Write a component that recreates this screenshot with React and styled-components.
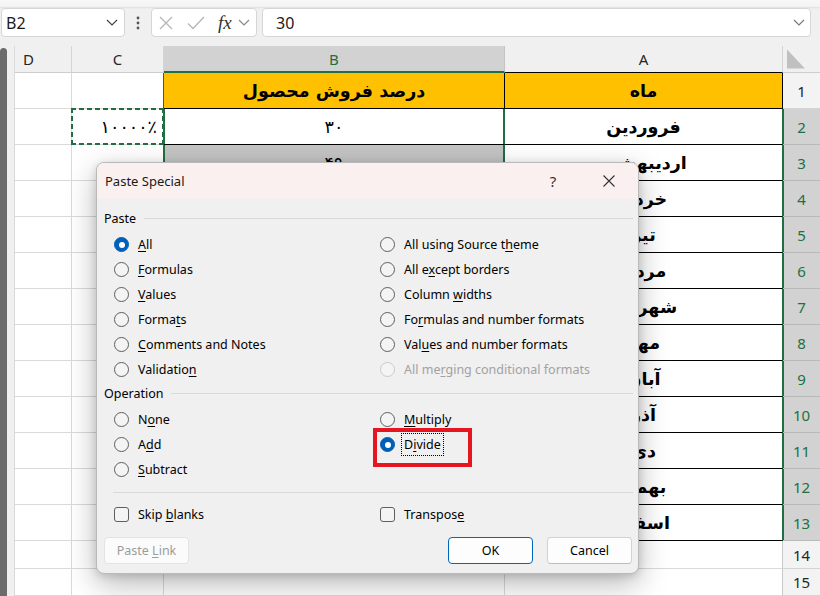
import React from 'react';
import styled, { createGlobalStyle } from 'styled-components';

const GREEN = '#1e6f41';
const UI = '"Noto Sans", "Open Sans", sans-serif';
const ARABIC = '"DejaVu Sans", sans-serif';

const months = ['فروردین', 'اردیبهشت', 'خرداد', 'تیر', 'مرداد', 'شهریور', 'مهر', 'آبان', 'آذر', 'دی', 'بهمن', 'اسفند'];
const shares = ['۳۰', '۴۹', '۲۵', '۳۸', '۴۲', '۵۵', '۳۱', '۲۷', '۴۴', '۳۶', '۵۰', '۴۱'];

const GlobalStyle = createGlobalStyle`
  * { box-sizing: border-box; }
  html, body { margin: 0; padding: 0; }
  body { background: #f0f0f0; font-family: ${UI}; overflow: hidden; }
`;

const Window = styled.div`
  position: relative;
  width: 820px;
  height: 596px;
  overflow: hidden;
  background: #f0f0f0;
  display: flex;
  flex-direction: column;
`;

const RibbonEdge = styled.div`
  height: 7px;
  background: linear-gradient(#f8f8f8, #f2f2f2);
  box-shadow: 0 1px 2px rgba(0, 0, 0, 0.07);
`;

const FormulaBar = styled.div`
  display: flex;
  align-items: center;
  height: 29px;
  margin: 1px 0 9px 1px;
`;

const Field = styled.div`
  display: flex;
  align-items: center;
  height: 29px;
  background: #fff;
  border: 1px solid #d6d6d6;
  border-radius: 4px;
  font-size: 16px;
  color: #1a1a1a;
`;

const NameBox = styled(Field)`
  width: 124px;
  padding: 0 6px 0 4px;
  justify-content: space-between;
`;

const Grip = styled.div`
  width: 26px;
  display: flex;
  justify-content: center;
`;

const FxBox = styled(Field)`
  width: 106px;
  padding-left: 7px;
`;

const ToolIcon = styled.span`
  display: flex;
  align-items: center;
  margin-left: ${p => p.$ml || 0}px;
`;

const FxText = styled.span`
  font-family: "Liberation Serif", serif;
  font-style: italic;
  font-size: 19px;
  color: #333;
  margin-left: 13px;
  line-height: 1;
`;

const FormulaInput = styled(Field)`
  margin-left: 5px;
  width: 549px;
  padding: 0 5px 0 13px;
  justify-content: space-between;
`;

const Sheet = styled.div`
  flex: 1;
  display: flex;
  min-height: 0;
`;

const LeftStrip = styled.div`
  width: 15px;
  display: flex;
  border-right: 1px solid #dadada;
`;

const Thumb = styled.div`
  width: 7px;
  margin-top: 2px;
  background: #6b6b6b;
  border-radius: 4px 4px 0 0;
`;

const Grid = styled.div`
  display: grid;
  grid-template-columns: 57px 92px 341px 278px 37px;
  grid-template-rows: 27px repeat(13, 36px) 28px 27px;
  background: #fff;
`;

const ColHeader = styled.div`
  display: flex;
  align-items: center;
  justify-content: ${p => (p.$start ? 'flex-start' : 'center')};
  padding-left: ${p => (p.$start ? '8px' : '0')};
  background: ${p => (p.$active ? '#d2d2d2' : '#f0f0f0')};
  color: ${p => (p.$active ? GREEN : '#262626')};
  border-right: 1px solid ${p => (p.$active ? '#c4c4c4' : '#d4d4d4')};
  border-bottom: ${p => (p.$active ? `2px solid ${GREEN}` : `1px solid ${p.$bc || '#cdcdcd'}`)};
  font-size: 15px;
`;

const Corner = styled.div`
  display: flex;
  align-items: center;
  padding-left: 4px;
  background: #f0f0f0;
  border-bottom: 1px solid #cdcdcd;
`;

const CornerMark = styled.span`
  width: 18px;
  height: 19px;
  background: #c0c0c0;
  clip-path: polygon(0 0, 0 100%, 100% 100%);
`;

const RowHeader = styled.div`
  display: flex;
  align-items: center;
  justify-content: center;
  background: ${p => (p.$active ? '#d2d2d2' : '#f3f3f3')};
  color: ${p => (p.$active ? GREEN : '#262626')};
  border-bottom: 1px solid ${p => (p.$active ? '#b9b9b9' : '#d4d4d4')};
  box-shadow: ${p => (p.$active ? `inset 1px 0 0 ${GREEN}` : 'none')};
  font-size: 15px;
`;

const DataCell = styled.div`
  position: relative;
  display: flex;
  align-items: center;
  justify-content: ${p => p.$align || 'center'};
  padding: 0 6px;
  background: ${p => p.$bg || '#fff'};
  border-right: 1px solid ${p => p.$rc || '#dadada'};
  border-bottom: 1px solid ${p => p.$bc || '#dadada'};
  box-shadow: ${p => (p.$sel ? `inset 1px 0 0 ${GREEN}, inset -1px 0 0 ${GREEN}` : 'none')};
  font-family: ${ARABIC};
  font-size: 17.5px;
  font-weight: ${p => (p.$bold ? 700 : 400)};
  color: #000;
  white-space: nowrap;

  ${p => p.$marquee && `
    &::after {
      content: '';
      position: absolute;
      top: -1px; left: -1px; right: -1px; bottom: -1px;
      background:
        repeating-linear-gradient(90deg, ${GREEN} 0 5px, transparent 5px 8px) top / 100% 2px no-repeat,
        repeating-linear-gradient(90deg, ${GREEN} 0 5px, transparent 5px 8px) bottom / 100% 2px no-repeat,
        repeating-linear-gradient(180deg, ${GREEN} 0 5px, transparent 5px 8px) left / 2px 100% no-repeat,
        repeating-linear-gradient(180deg, ${GREEN} 0 5px, transparent 5px 8px) right / 2px 100% no-repeat;
    }
  `}
`;

/* dialog */

const Dialog = styled.div`
  position: absolute;
  top: 162px;
  left: 96px;
  width: 543px;
  height: 412px;
  border: 1px solid #b9b9b9;
  border-radius: 8px;
  overflow: hidden;
  background: #f0f0f0;
  box-shadow: 0 10px 30px rgba(0, 0, 0, 0.28), 0 2px 8px rgba(0, 0, 0, 0.14);
  font-size: 12.5px;
  color: #000;
`;

const TitleBar = styled.div`
  height: 36px;
  display: flex;
  align-items: center;
  justify-content: space-between;
  padding: 0 9px 0 8px;
  background: #f9f0ef;
`;

const Title = styled.span`
  font-size: 13px;
  color: #1a1a1a;
`;

const TitleButtons = styled.div`
  display: flex;
  align-items: center;
  gap: 16px;
`;

const TitleButton = styled.span`
  width: 40px;
  display: flex;
  justify-content: center;
  font-size: 15px;
  color: #333;
`;

const Body = styled.div`
  padding: 11px 5px 9px 7px;
`;

const SectionHead = styled.div`
  display: flex;
  align-items: center;
  gap: 8px;
  height: 16px;
  margin-top: ${p => p.$mt || 0}px;
  &::after {
    content: '';
    flex: 1;
    height: 1px;
    background: #d9d9d9;
  }
`;

const Options = styled.div`
  display: grid;
  grid-template-columns: 266px 1fr;
  grid-template-rows: repeat(${p => p.$rows}, 25px);
  grid-auto-flow: column;
  padding-left: 10px;
  margin-top: ${p => p.$mt || 6}px;
`;

const Option = styled.div`
  position: relative;
  display: flex;
  align-items: center;
  gap: 9px;
  color: ${p => (p.$disabled ? '#a2a2a2' : '#000')};
  white-space: nowrap;
`;

const RadioDot = styled.span`
  flex: none;
  width: 15px;
  height: 15px;
  border-radius: 50%;
  display: flex;
  align-items: center;
  justify-content: center;
  border: 1px solid ${p => (p.$disabled ? '#cacaca' : p.$checked ? '#005fb8' : '#5e5e5e')};
  background: ${p => (p.$checked ? '#005fb8' : '#f4f4f4')};
  &::after {
    content: '';
    display: ${p => (p.$checked ? 'block' : 'none')};
    width: 6px;
    height: 6px;
    border-radius: 50%;
    background: #fff;
  }
`;

const CheckBox = styled.span`
  flex: none;
  width: 15px;
  height: 15px;
  border-radius: 3px;
  border: 1px solid #5e5e5e;
  background: #f4f4f4;
`;

const Label = styled.span`
  line-height: 17px;
  ${p => p.$focus && `
    outline: 1px dotted #000;
    padding: 2px 2px;
    margin-left: -2px;
  `}
  u {
    text-decoration-thickness: 1px;
    text-underline-offset: 2px;
  }
`;

const RedBox = styled.span`
  position: absolute;
  left: -7px;
  top: -4px;
  width: 99px;
  height: 39px;
  border: 4px solid #e5161f;
  pointer-events: none;
`;

const Divider = styled.div`
  height: 1px;
  background: #d9d9d9;
  margin: 10px 0 0 9px;
`;

const ButtonRow = styled.div`
  display: flex;
  align-items: center;
  margin-top: 10px;
`;

const Button = styled.button`
  width: 85px;
  height: 27px;
  margin-left: ${p => p.$ml || 0}px;
  border-radius: 4px;
  background: ${p => (p.$disabled ? '#fbfbfb' : '#fdfdfd')};
  border: 1px solid ${p => (p.$primary ? '#0067c0' : p.$disabled ? '#e3e3e3' : '#d2d2d2')};
  border-bottom-color: ${p => (p.$primary ? '#0067c0' : p.$disabled ? '#e3e3e3' : '#bdbdbd')};
  color: ${p => (p.$disabled ? '#9c9c9c' : '#000')};
  font-family: ${UI};
  font-size: 12.5px;
  padding: 0;
  u {
    text-underline-offset: 2px;
  }
`;

const Chevron = ({ color = '#444' }) => (
  <svg width="12" height="7" viewBox="0 0 12 7">
    <path d="M1 1l5 5 5-5" fill="none" stroke={color} strokeWidth="1.2" />
  </svg>
);

const Key = ({ text, k }) => (
  <>
    {text.slice(0, k)}
    <u>{text[k]}</u>
    {text.slice(k + 1)}
  </>
);

const Radio = ({ text, k, checked, disabled, focus }) => (
  <Option $disabled={disabled}>
    <RadioDot $checked={checked} $disabled={disabled} />
    <Label $focus={focus}>
      <Key text={text} k={k} />
    </Label>
  </Option>
);

function SheetGrid() {
  const cells = [
    <ColHeader key="hD" $start>D</ColHeader>,
    <ColHeader key="hC">C</ColHeader>,
    <ColHeader key="hB" $active>B</ColHeader>,
    <ColHeader key="hA" $bc="#000">A</ColHeader>,
    <Corner key="corner"><CornerMark /></Corner>,
  ];

  for (let r = 1; r <= 15; r++) {
    const inTable = r <= 13;
    const inSel = r >= 2 && r <= 13;
    const gray = '#dadada';
    cells.push(<DataCell key={`D${r}`} />);
    cells.push(
      <DataCell key={`C${r}`} $rc={inTable ? GREEN : gray} $align="flex-end" $marquee={r === 2}>
        {r === 2 ? '۱۰۰۰۰٪' : ''}
      </DataCell>
    );
    cells.push(
      <DataCell
        key={`B${r}`}
        $bg={r === 1 ? '#ffc000' : inSel && r > 2 ? '#c4c4c4' : '#fff'}
        $rc={inSel ? GREEN : inTable ? '#000' : gray}
        $bc={inTable ? '#000' : gray}
        $sel={inSel}
        $bold={r === 1}
      >
        {r === 1 ? 'درصد فروش محصول' : inTable ? shares[r - 2] : ''}
      </DataCell>
    );
    cells.push(
      <DataCell
        key={`A${r}`}
        $bg={r === 1 ? '#ffc000' : '#fff'}
        $rc={r === 1 ? '#000' : inSel ? GREEN : '#c9c9c9'}
        $bc={inTable ? '#000' : gray}
        $bold
      >
        {r === 1 ? 'ماه' : inTable ? months[r - 2] : ''}
      </DataCell>
    );
    cells.push(<RowHeader key={`R${r}`} $active={inSel}>{r}</RowHeader>);
  }
  return <Grid>{cells}</Grid>;
}

function PasteSpecial() {
  return (
    <Dialog>
      <TitleBar>
        <Title>Paste Special</Title>
        <TitleButtons>
          <TitleButton>?</TitleButton>
          <TitleButton>
            <svg width="12" height="12" viewBox="0 0 12 12">
              <path d="M0.5 0.5l11 11M11.5 0.5l-11 11" stroke="#333" strokeWidth="1.1" />
            </svg>
          </TitleButton>
        </TitleButtons>
      </TitleBar>
      <Body>
        <SectionHead>Paste</SectionHead>
        <Options $rows={6}>
          <Radio text="All" k={0} checked />
          <Radio text="Formulas" k={0} />
          <Radio text="Values" k={0} />
          <Radio text="Formats" k={5} />
          <Radio text="Comments and Notes" k={0} />
          <Radio text="Validation" k={9} />
          <Radio text="All using Source theme" k={18} />
          <Radio text="All except borders" k={5} />
          <Radio text="Column widths" k={7} />
          <Radio text="Formulas and number formats" k={2} />
          <Radio text="Values and number formats" k={3} />
          <Radio text="All merging conditional formats" k={6} disabled />
        </Options>
        <SectionHead $mt={3}>Operation</SectionHead>
        <Options $rows={3}>
          <Radio text="None" k={1} />
          <Radio text="Add" k={1} />
          <Radio text="Subtract" k={0} />
          <Radio text="Multiply" k={0} />
          <Option>
            <RadioDot $checked />
            <Label $focus>
              <Key text="Divide" k={1} />
            </Label>
            <RedBox />
          </Option>
        </Options>
        <Divider />
        <Options $rows={1} $mt={9}>
          <Option>
            <CheckBox />
            <Label><Key text="Skip blanks" k={5} /></Label>
          </Option>
          <Option>
            <CheckBox />
            <Label><Key text="Transpose" k={8} /></Label>
          </Option>
        </Options>
        <ButtonRow>
          <Button $disabled><Key text="Paste Link" k={6} /></Button>
          <Button $primary $ml={259}>OK</Button>
          <Button $ml={14}>Cancel</Button>
        </ButtonRow>
      </Body>
    </Dialog>
  );
}

export default function App() {
  return (
    <Window>
      <GlobalStyle />
      <RibbonEdge />
      <FormulaBar>
        <NameBox>
          <span>B2</span>
          <Chevron />
        </NameBox>
        <Grip>
          <svg width="4" height="14" viewBox="0 0 4 14">
            <circle cx="2" cy="2" r="1.4" fill="#555" />
            <circle cx="2" cy="7" r="1.4" fill="#555" />
            <circle cx="2" cy="12" r="1.4" fill="#555" />
          </svg>
        </Grip>
        <FxBox>
          <ToolIcon>
            <svg width="14" height="14" viewBox="0 0 14 14">
              <path d="M1 1l12 12M13 1L1 13" stroke="#b6b6b6" strokeWidth="1.3" />
            </svg>
          </ToolIcon>
          <ToolIcon $ml={14}>
            <svg width="18" height="14" viewBox="0 0 18 14">
              <path d="M1 7.5l5 5L17 1" fill="none" stroke="#b6b6b6" strokeWidth="1.3" />
            </svg>
          </ToolIcon>
          <FxText>fx</FxText>
          <ToolIcon $ml={6}>
            <Chevron color="#888" />
          </ToolIcon>
        </FxBox>
        <FormulaInput>
          <span>30</span>
          <Chevron color="#777" />
        </FormulaInput>
      </FormulaBar>
      <Sheet>
        <LeftStrip>
          <Thumb />
        </LeftStrip>
        <SheetGrid />
      </Sheet>
      <PasteSpecial />
    </Window>
  );
}
